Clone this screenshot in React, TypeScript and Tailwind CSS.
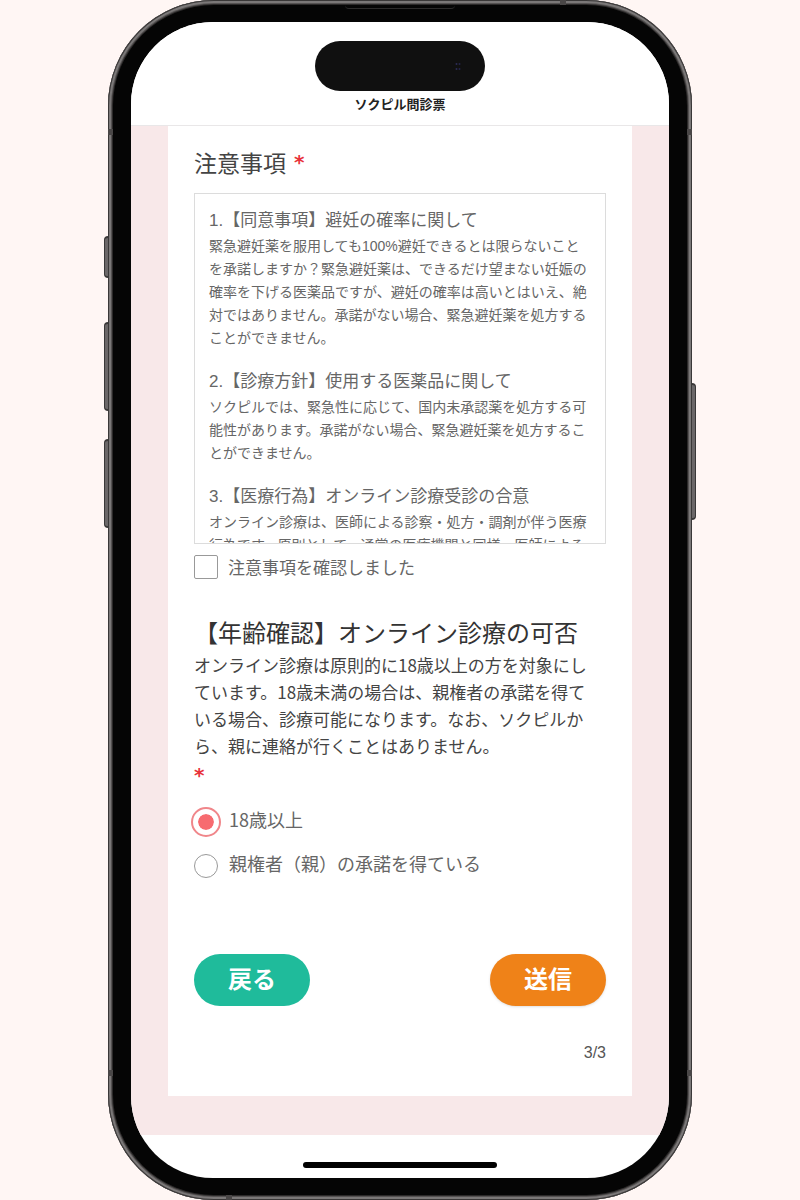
import { useState } from "react";

const notices = [
  {
    title: "1.【同意事項】避妊の確率に関して",
    body: "緊急避妊薬を服用しても100%避妊できるとは限らないことを承諾しますか？緊急避妊薬は、できるだけ望まない妊娠の確率を下げる医薬品ですが、避妊の確率は高いとはいえ、絶対ではありません。承諾がない場合、緊急避妊薬を処方することができません。",
  },
  {
    title: "2.【診療方針】使用する医薬品に関して",
    body: "ソクピルでは、緊急性に応じて、国内未承認薬を処方する可能性があります。承諾がない場合、緊急避妊薬を処方することができません。",
  },
  {
    title: "3.【医療行為】オンライン診療受診の合意",
    body: "オンライン診療は、医師による診察・処方・調剤が伴う医療行為です。原則として、通常の医療機関と同様、医師による",
  },
];

const ages = ["18歳以上", "親権者（親）の承諾を得ている"];

function Required() {
  return <span className="font-['DejaVu_Sans',sans-serif] text-[20px] leading-5 font-bold text-[#e8323a]">*</span>;
}

function SideButtons() {
  return (
    <>
      <div className="absolute right-full inset-y-0 w-1 flex flex-col pt-[236px]">
        <div className="h-[42px] rounded-l-sm bg-[#6b6768] border-y-2 border-l border-[#3a3838]" />
        <div className="mt-11 h-[89px] rounded-l-sm bg-[#6b6768] border-y-2 border-l border-[#3a3838]" />
        <div className="mt-7 h-[89px] rounded-l-sm bg-[#6b6768] border-y-2 border-l border-[#3a3838]" />
      </div>
      <div className="absolute left-full inset-y-0 w-1 flex flex-col pt-[383px]">
        <div className="h-[137px] rounded-r-sm bg-[#6b6768] border-y-2 border-r border-[#3a3838]" />
      </div>
    </>
  );
}

// dark antenna lines across the metal rim
function AntennaBands() {
  return (
    <div className="absolute inset-0 flex flex-col justify-between">
      <div className="flex justify-end pr-[126px]">
        <div className="w-1.5 h-[5px] bg-[#4a4747]" />
      </div>
      <div className="flex-1 flex flex-col justify-between pt-[124px] pb-[119px]">
        <div className="h-1.5 border-x-[5px] border-[#4a4747]" />
        <div className="h-1.5 border-x-[5px] border-[#4a4747]" />
      </div>
      <div className="flex pl-[118px]">
        <div className="w-1.5 h-[5px] bg-[#4a4747]" />
      </div>
    </div>
  );
}

function Header() {
  return (
    <header className="flex flex-col items-center bg-white pt-[19px] pb-[11px] border-b border-[#e9e7e8]">
      <div className="flex items-center justify-end w-[170px] h-[50px] pr-6 rounded-full bg-[#101010]">
        <svg width="6" height="12" viewBox="0 0 6 12">
          <circle cx="1.5" cy="4" r="1" fill="#2c2c55" />
          <circle cx="4.5" cy="4" r="1" fill="#24244a" />
          <circle cx="1.5" cy="9" r="1" fill="#2c2c55" />
          <circle cx="4.5" cy="9" r="1" fill="#24244a" />
        </svg>
      </div>
      <h1 className="mt-[3px] text-[13px] leading-5 font-bold text-[#222]">ソクピル問診票</h1>
    </header>
  );
}

export default function App() {
  const [agreed, setAgreed] = useState(false);
  const [age, setAge] = useState(ages[0]);

  return (
    <div lang="ja" className="min-h-screen bg-[#fff6f4] font-['Noto_Sans_CJK_JP',sans-serif]">
      <div className="relative w-full max-w-[584px] mx-auto p-[5px] rounded-[106px] bg-[#2b2929] shadow-[inset_0_0_0_1px_#3a3838,inset_0_0_0_3px_#7b7878,inset_0_0_0_4px_#555252]">
        <SideButtons />
        <AntennaBands />
        <div className="relative px-[18px] pb-[17px] rounded-[101px] bg-[#050505]">
          <div className="flex justify-center h-[17px]">
            <div className="w-[110px] h-1 rounded-b-sm border-b border-[#2c2b2b]" />
          </div>
          <div className="rounded-[82px] overflow-hidden bg-white">
            <Header />
            <main className="bg-[#f8e8e9] px-[37px] pb-[39px]">
              <form className="bg-white px-[26px] pt-5 pb-[33px]" onSubmit={(e) => e.preventDefault()}>
                <h2 className="flex items-center gap-2 mb-[15px] text-[23px] leading-8 text-[#444]">
                  注意事項 <Required />
                </h2>

                <div className="h-[351px] overflow-y-auto [scrollbar-width:none] border border-[#dcdcdc] px-[14px] pt-3 font-['Liberation_Sans','Noto_Sans_CJK_JP',sans-serif] text-[#666]">
                  {notices.map((n) => (
                    <section key={n.title} className="mb-[17px]">
                      <h3 className="text-[17px] leading-[29px]">{n.title}</h3>
                      <p className="text-[14px] leading-[23px]">{n.body}</p>
                    </section>
                  ))}
                </div>

                <label className="flex items-center gap-2.5 mt-[11px] text-[17px] leading-6 text-[#666]">
                  <input
                    type="checkbox"
                    checked={agreed}
                    onChange={(e) => setAgreed(e.target.checked)}
                    className="appearance-none shrink-0 size-6 rounded-xs border border-[#999] bg-white checked:bg-[#f76b70]"
                  />
                  注意事項を確認しました
                </label>

                <fieldset className="mt-[37px]">
                  <legend className="text-[24px] leading-8 text-[#333]">【年齢確認】オンライン診療の可否</legend>
                  <p className="mt-[3px] pr-1.5 text-[17px] leading-[27px] text-[#444]">
                    オンライン診療は原則的に18歳以上の方を対象にしています。18歳未満の場合は、親権者の承諾を得ている場合、診療可能になります。なお、ソクピルから、親に連絡が行くことはありません。
                  </p>
                  <p className="flex items-center h-[27px] pt-1">
                    <Required />
                  </p>
                  <div className="mt-[14px]">
                    {ages.map((a) => (
                      <label key={a} className="flex items-center gap-[11px] h-11 text-[18px] leading-6 text-[#666]">
                        <input
                          type="radio"
                          name="age"
                          checked={age === a}
                          onChange={() => setAge(a)}
                          className="appearance-none shrink-0 size-6 rounded-full border border-[#999] bg-white bg-clip-padding checked:border-4 checked:border-white checked:bg-[#f76b70] checked:outline-2 checked:outline-offset-1 checked:outline-[#f0868a]"
                        />
                        <span className="pb-1.5">{a}</span>
                      </label>
                    ))}
                  </div>
                </fieldset>

                <div className="flex justify-between mt-[66px]">
                  <button type="button" className="w-[116px] h-[52px] pb-1 rounded-full bg-[#1fbb9b] text-[24px] leading-8 font-bold text-white">
                    戻る
                  </button>
                  <button type="submit" className="w-[116px] h-[52px] pb-1 rounded-full bg-[#ef8218] text-[24px] leading-8 font-bold text-white shadow-sm">
                    送信
                  </button>
                </div>
                <p className="mt-[37px] text-right font-['Liberation_Sans',sans-serif] text-[16px] leading-5 text-[#555]">3/3</p>
              </form>
            </main>
            <div className="flex justify-center pt-[27px] pb-[10px]">
              <div className="w-[194px] h-1.5 rounded-full bg-black" />
            </div>
          </div>
        </div>
      </div>
    </div>
  );
}
